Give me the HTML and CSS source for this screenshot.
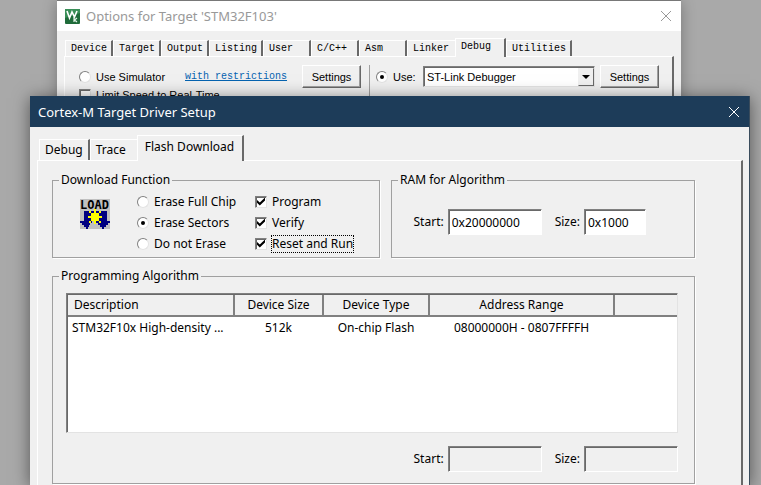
FILE: index.html
```html
<!DOCTYPE html>
<html lang="en">
<head>
<meta charset="utf-8">
<title>Cortex-M Target Driver Setup</title>
<link rel="stylesheet" href="styles.css">
</head>
<body>
<div class="desktop">
  <section class="window options">
    <header class="titlebar">
      <svg class="app-icon" viewBox="0 0 15 15" aria-hidden="true">
        <rect width="15" height="15" rx="1" fill="#1f6b3a"/>
        <path d="M0 0h15v4L0 9z" fill="#3a8f58"/>
        <path d="M2 2l2.500 7L7 3l2.500 5L12 2" fill="none" stroke="#fff" stroke-width="1.600"/>
        <path d="M9 8v5M12 9l-2.500 2 2.500 2" fill="none" stroke="#e4f3e8" stroke-width="1.200"/>
      </svg>
      <h1 class="title">Options for Target 'STM32F103'</h1>
      <button class="close" aria-label="Close options">
        <svg viewBox="0 0 12 12" aria-hidden="true"><path d="M1 1l10 10M11 1L1 11"/></svg>
      </button>
    </header>
    <div class="options-body">
      <nav class="tabs mono-tabs">
        <button class="tab">Device</button>
        <button class="tab">Target</button>
        <button class="tab">Output</button>
        <button class="tab">Listing</button>
        <button class="tab">User</button>
        <button class="tab">C/C++</button>
        <button class="tab">Asm</button>
        <button class="tab plain">Linker</button>
        <button class="tab selected">Debug</button>
        <button class="tab">Utilities</button>
      </nav>
      <div class="page options-page">
        <div class="simulator">
          <div class="line">
            <label class="choice sim-choice"><input type="radio" name="driver">Use Simulator</label>
            <a class="restrictions" href="#">with restrictions</a>
            <button class="push">Settings</button>
          </div>
          <label class="choice"><input type="checkbox">Limit Speed to Real-Time</label>
        </div>
        <div class="hardware">
          <label class="choice use-choice"><input type="radio" name="driver" checked>Use:</label>
          <span class="combo">
            <select aria-label="Debugger"><option>ST-Link Debugger</option></select>
            <span class="drop"></span>
          </span>
          <button class="push">Settings</button>
        </div>
      </div>
    </div>
  </section>

  <section class="window driver">
    <header class="titlebar">
      <h2 class="title">Cortex-M Target Driver Setup</h2>
      <button class="close" aria-label="Close driver setup">
        <svg viewBox="0 0 12 12" aria-hidden="true"><path d="M1 1l10 10M11 1L1 11"/></svg>
      </button>
    </header>
    <div class="driver-body">
      <nav class="tabs">
        <button class="tab">Debug</button>
        <button class="tab plain">Trace</button>
        <button class="tab selected">Flash Download</button>
      </nav>
      <div class="page driver-page">
        <fieldset class="group">
          <legend>Download Function</legend>
          <div class="download">
            <svg class="load-icon" viewBox="0 0 30 30" aria-hidden="true" shape-rendering="crispEdges">
              <rect width="30" height="30" fill="#c0c0c0"/>
              <path d="M4 12h23v10h3v2h-2v2h-2v2h-2v2h-2v-2h-2v-2h-2v-2h-2v-2H12v2h-2v2H9v2H8v2H6v-2H4v-2H2v-2H0v-2h4z" fill="#000080"/>
              <path d="M14 10h2v15h-2zM8 17h14v2H8zM9 12h2v2h2v2h-2v-2H9zM21 12h-2v2h-2v2h2v-2h2zM9 24h2v-2h2v-2h-2v2H9zM21 24h-2v-2h-2v-2h2v2h2z" fill="#ffff00"/>
              <path d="M12 14h6v1h1v6h-1v1h-6v-1h-1v-6h1z" fill="#ffff00"/>
              <text x="0" y="10">LOAD</text>
            </svg>
            <div class="stack radios">
              <label class="choice"><input type="radio" name="erase">Erase Full Chip</label>
              <label class="choice"><input type="radio" name="erase" checked>Erase Sectors</label>
              <label class="choice"><input type="radio" name="erase">Do not Erase</label>
            </div>
            <div class="stack">
              <label class="choice"><input type="checkbox" checked>Program</label>
              <label class="choice"><input type="checkbox" checked>Verify</label>
              <label class="choice"><input type="checkbox" checked><span class="focused">Reset and Run</span></label>
            </div>
          </div>
        </fieldset>

        <fieldset class="group">
          <legend>RAM for Algorithm</legend>
          <div class="range ram">
            <label for="ram-start">Start:</label>
            <input class="field" id="ram-start" type="text" value="0x20000000">
            <label for="ram-size">Size:</label>
            <input class="field short" id="ram-size" type="text" value="0x1000">
          </div>
        </fieldset>

        <fieldset class="group wide">
          <legend>Programming Algorithm</legend>
          <div class="list">
            <table>
              <colgroup>
                <col class="c-description"><col class="c-size"><col class="c-type"><col class="c-range"><col>
              </colgroup>
              <thead>
                <tr><th>Description</th><th>Device Size</th><th>Device Type</th><th>Address Range</th><th></th></tr>
              </thead>
              <tbody>
                <tr><td>STM32F10x High-density ...</td><td>512k</td><td>On-chip Flash</td><td>08000000H - 0807FFFFH</td><td></td></tr>
              </tbody>
            </table>
          </div>
          <div class="range algorithm">
            <label for="alg-start">Start:</label>
            <input class="field" id="alg-start" type="text" disabled>
            <label for="alg-size">Size:</label>
            <input class="field" id="alg-size" type="text" disabled>
          </div>
        </fieldset>
      </div>
    </div>
  </section>
</div>
</body>
</html>
```
FILE: styles.css
```css
* { box-sizing: border-box; }

body {
  margin: 0;
  font: 12px/16px "Noto Sans", "Open Sans", sans-serif;
  color: #000;
}

button, input, select { font: inherit; color: inherit; margin: 0; }

.desktop {
  position: relative;
  height: 100vh;
  overflow: hidden;
  background: #a9a9a9;
}

.window { position: absolute; background: #f0f0f0; }

.options {
  top: 0;
  left: 57px;
  right: 80px;
  border-top: 1px solid #787878;
  box-shadow: 0 2px 14px rgba(0, 0, 0, 0.3);
}

.driver {
  top: 96px;
  bottom: 0;
  left: 30px;
  right: 11px;
  border-right: 1px solid #3a4c5c;
  box-shadow: 0 2px 16px rgba(0, 0, 0, 0.5);
}

/* Title bars */
.titlebar { display: flex; align-items: center; height: 31px; }
.options .titlebar { height: 30px; padding: 0 8px; background: #fff; color: #999; }
.driver .titlebar { padding: 0 8px; background: #1d3c59; color: #fff; }
.title { flex: 1; margin: 0; font-size: 13px; font-weight: 400; }
.app-icon { width: 15px; height: 15px; margin-right: 6px; }
.close { width: 14px; height: 14px; padding: 1px; border: 0; background: none; }
.close svg { display: block; width: 12px; height: 12px; fill: none; stroke: currentColor; }

/* Tabs */
.tabs { display: flex; align-items: flex-end; padding-left: 2px; }
.tab {
  height: 21px;
  padding: 0 5px;
  border: solid #fff;
  border-width: 1px 0 0 1px;
  border-right: 2px solid #696969;
  background: none;
  text-align: left;
  white-space: nowrap;
}
.tab.plain { padding-right: 11px; border-right: 0; }
.tab.selected { position: relative; height: 26px; margin-bottom: -1px; padding: 0 8px 4px 7px; background: #f0f0f0; }

.mono-tabs { padding-left: 1px; font: 10px/12px "Liberation Mono", monospace; }
.mono-tabs .tab { min-width: 48px; height: 16px; padding: 0 4px 0 5px; }
.mono-tabs .tab.selected { min-width: 51px; height: 19px; padding-bottom: 3px; }

.page { border-top: 1px solid #fff; border-left: 1px solid #fff; border-right: 2px solid #696969; }

/* Radio buttons and tick boxes */
.choice { display: flex; align-items: center; gap: 5px; white-space: nowrap; }
.choice input {
  appearance: none;
  display: grid;
  place-items: center;
  flex: none;
  width: 12px;
  height: 12px;
  border: 1px solid;
  border-color: #808080 #e3e3e3 #e3e3e3 #808080;
  background: #fff;
}
.choice input[type="radio"] { border-radius: 50%; }
.choice input[type="radio"]:checked::before {
  content: "";
  width: 4px;
  height: 4px;
  border-radius: 50%;
  background: #000;
}
.choice input[type="checkbox"] { box-shadow: inset 1px 1px #696969; }
.choice input[type="checkbox"]:checked::before {
  content: "";
  width: 8px;
  height: 8px;
  background: #000;
  clip-path: polygon(0 30%, 35% 62%, 100% 0, 100% 36%, 35% 100%, 0 66%);
}
.focused { outline: 1px dotted #000; }

/* Options window */
.options-body { padding: 7px 7px 0; }
.options-page {
  display: flex;
  padding: 8px 14px;
  font: 11px/14px "Liberation Sans", sans-serif;
}
.line { display: flex; align-items: center; }
.simulator { padding-right: 8px; border-right: 1px solid #a0a0a0; }
.sim-choice { width: 106px; }
.restrictions { width: 117px; font: 10px/12px "Liberation Mono", monospace; color: #0563b0; }
.hardware { display: flex; align-items: center; align-self: flex-start; padding-left: 6px; }
.use-choice { width: 47px; }
.push {
  width: 59px;
  height: 23px;
  padding: 0;
  border: 1px solid;
  border-color: #fff #696969 #696969 #fff;
  box-shadow: inset -1px -1px #a0a0a0;
  background: #f0f0f0;
}
.combo { position: relative; margin-right: 5px; }
.combo select {
  appearance: none;
  display: block;
  width: 172px;
  height: 21px;
  padding: 0 3px;
  border: 1px solid;
  border-color: #808080 #e3e3e3 #e3e3e3 #808080;
  border-radius: 0;
  box-shadow: inset 1px 1px #696969;
  background: #fff;
}
.drop {
  position: absolute;
  top: 2px;
  right: 1px;
  bottom: 1px;
  display: grid;
  place-items: center;
  width: 16px;
  border: 1px solid;
  border-color: #f0f0f0 #696969 #696969 #f0f0f0;
  background: #f0f0f0;
  pointer-events: none;
}
.drop::before { content: ""; border: 4px solid transparent; border-top-color: #000; border-bottom: 0; }

/* Driver window */
.driver-body { padding: 8px 6px 0 7px; }
.driver-page {
  display: grid;
  grid-template-columns: minmax(0, 328fr) minmax(0, 304fr);
  gap: 10px 11px;
  min-height: 360px;
  align-content: start;
  padding: 11px 46px 0 14px;
}
.group {
  min-width: 0;
  margin: 0;
  padding: 0 6px;
  border: 1px solid #a0a0a0;
  box-shadow: 1px 1px #fff;
}
.group legend { padding: 0 2px; }
.wide { grid-column: 1 / -1; }

.download { display: flex; padding: 3px 0 3px 21px; }
.load-icon { width: 30px; height: 30px; margin: 8px 27px 0 0; }
.load-icon text { font: bold 12px "DejaVu Sans Mono", monospace; }
.stack { display: grid; grid-auto-rows: 21px; }
.radios { width: 118px; }

.range { display: flex; align-items: center; justify-content: flex-end; }
.range label { margin-right: 4px; }
.field {
  width: 94px;
  height: 26px;
  padding: 0 3px;
  border: 1px solid;
  border-color: #808080 #fff #fff #808080;
  box-shadow: inset 1px 1px #696969;
  background: #fff;
}
.field:disabled { background: #f0f0f0; }
.field + label { margin-left: 13px; }
.field.short { width: 62px; }
.ram { padding: 21px 42px 19px 0; }
.algorithm { padding: 13px 10px 11px 0; }

.list {
  min-height: 140px;
  margin: 9px 10px 0 7px;
  border: 1px solid;
  border-color: #808080 #e3e3e3 #e3e3e3 #808080;
  box-shadow: inset 1px 1px #696969;
  background: #fff;
  padding: 1px 0 0 1px;
}
.list table { width: 100%; table-layout: fixed; border-collapse: collapse; }
.c-description { width: 166px; }
.c-size { width: 89px; }
.c-type { width: 106px; }
.c-range { width: 185px; }
.list th {
  height: 21px;
  padding: 0 6px;
  border-right: 2px solid #808080;
  border-bottom: 2px solid #808080;
  background: #f0f0f0;
  font-weight: 400;
}
.list th:last-child { border-right: 0; }
.list td { height: 22px; padding: 0 4px; text-align: center; white-space: nowrap; }
.list th:first-child, .list td:first-child { text-align: left; }
```
